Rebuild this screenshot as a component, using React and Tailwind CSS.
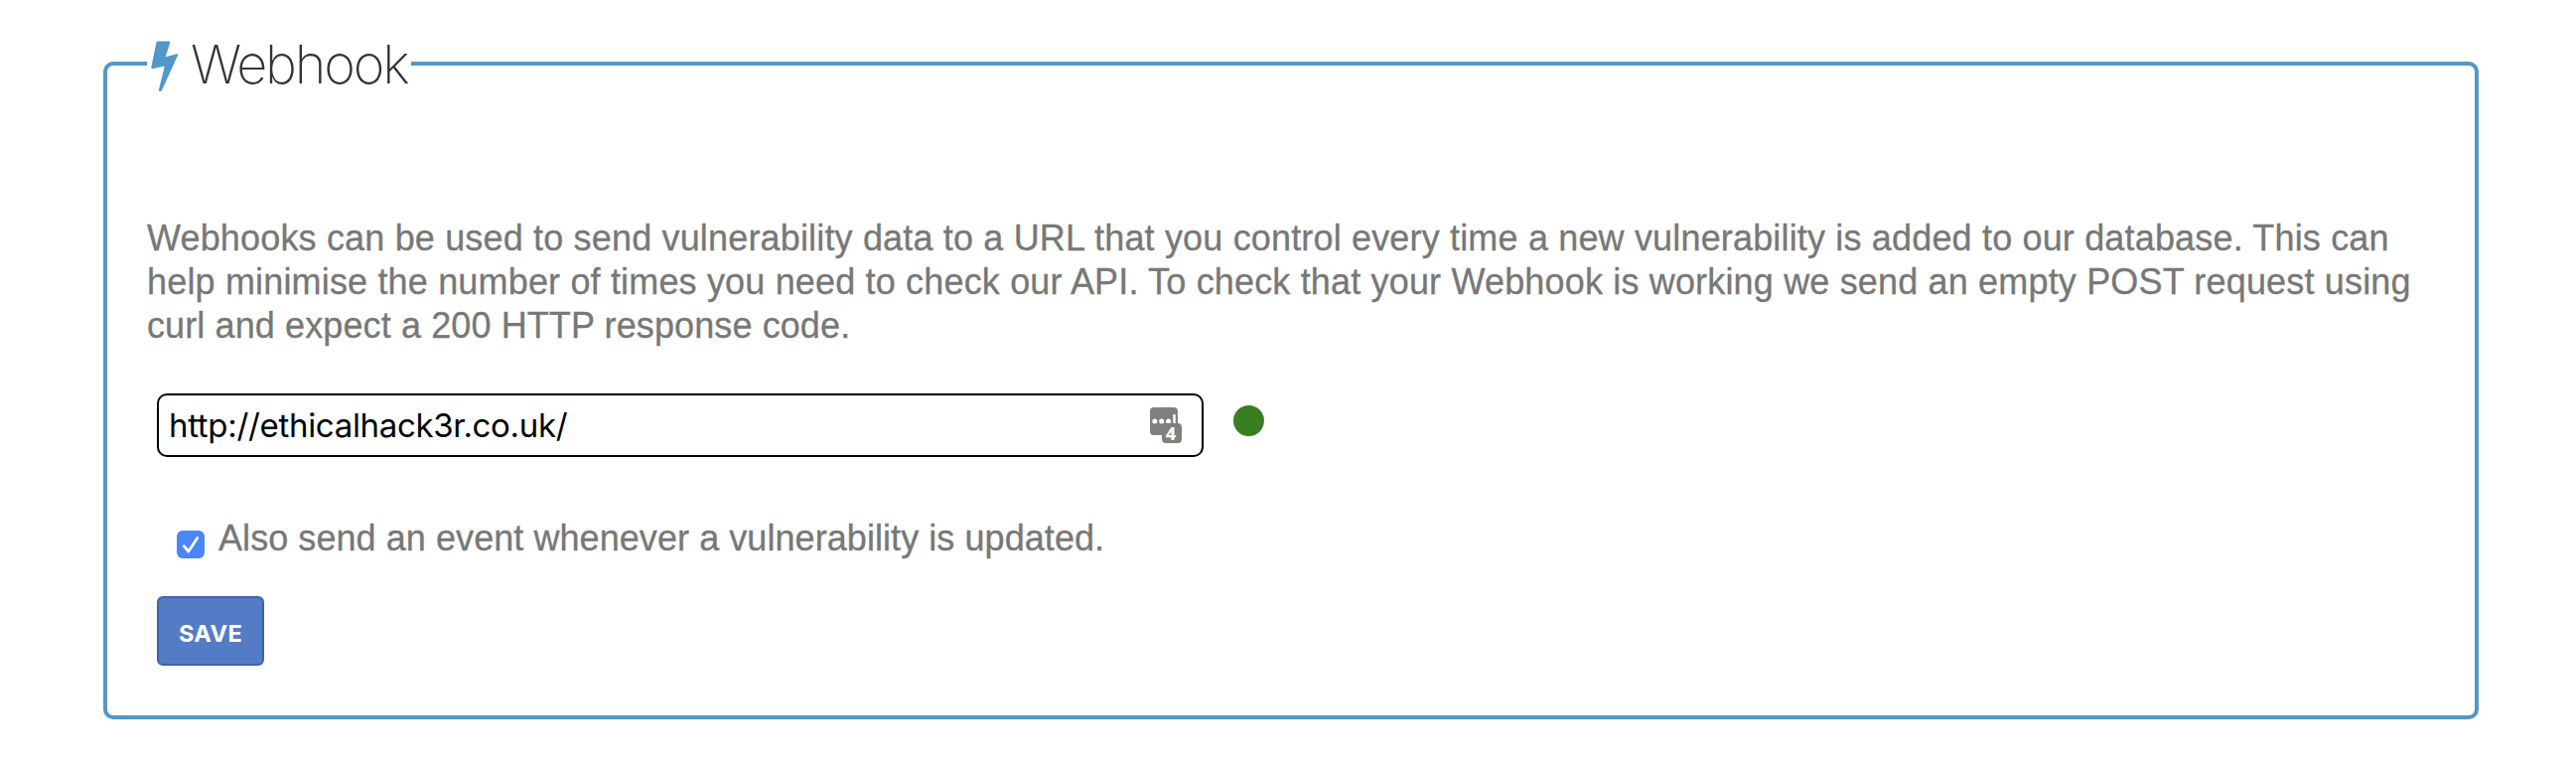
function BoltIcon() {
  return (
    <svg className="h-[52px] w-[28px] shrink-0" viewBox="0 0 28 52" fill="#5397c9">
      <path d="M7 0.5H18.2Q19.6 0.7 19.2 2L14.8 16.2L26 13.3Q27.6 13.1 27 14.8L10.9 50Q10 51.3 8.6 50.8Q7.700 50.4 8 49L13.800 25.500L1.700 28.200Q0 28.400 0.300 26.800L5.400 1.800Q5.700 0.600 7 0.500Z" />
    </svg>
  );
}

function PasswordManagerIcon() {
  return (
    <svg className="h-[36px] w-[32px] shrink-0" viewBox="0 0 32 36">
      <rect width="28" height="28" rx="4" fill="#808080" />
      <circle cx="4.800" cy="14" r="2.500" fill="#fff" />
      <circle cx="11.700" cy="14" r="2.500" fill="#fff" />
      <circle cx="18.600" cy="14" r="2.500" fill="#fff" />
      <rect x="23.300" y="7" width="2.400" height="10" fill="#fff" />
      <rect x="12" y="16" width="20" height="20" rx="4" fill="#808080" />
      <text x="21" y="32.500" textAnchor="middle" fill="#fff" className="font-['Noto_Sans',sans-serif] text-[18px] font-extrabold">4</text>
    </svg>
  );
}

export default function App() {
  return (
    <main className="h-[776px] w-[2594px] bg-white pt-[34px] pl-[104px] font-['Liberation_Sans',sans-serif] text-[36px] leading-[44px] text-[#777]">
      <fieldset className="h-[690px] w-[2392px] rounded-[10px] border-4 border-[#5397c9] px-[40px]">
        <legend className="h-[60px] w-[266px]">
          <div className="flex h-[60px] items-start pt-[7px] pl-[4px]">
            <BoltIcon />
            <h1 className="ml-[12px] font-['Inter',sans-serif] text-[54px] leading-[48px] font-extralight tracking-[-2.200px] whitespace-nowrap text-[#333]">Webhook</h1>
          </div>
        </legend>
        <p className="mt-[124px] whitespace-nowrap [-webkit-text-stroke:0.3px_#777]">
          <span className="block tracking-[0.166px]">Webhooks can be used to send vulnerability data to a URL that you control every time a new vulnerability is added to our database. This can</span>
          <span className="block tracking-[0.168px]">help minimise the number of times you need to check our API. To check that your Webhook is working we send an empty POST request using</span>
          <span className="block tracking-[0.110px]">curl and expect a 200 HTTP response code.</span>
        </p>
        <div className="mt-[46px] ml-[10px] flex">
          <div className="flex h-[64px] w-[1054px] items-center rounded-[10px] border-2 border-black pr-[20px] pl-[10px]">
            <input
              type="text"
              aria-label="Webhook URL"
              defaultValue="http://ethicalhack3r.co.uk/"
              className="h-[44px] min-w-0 flex-1 bg-transparent font-['Inter',sans-serif] text-[33px] tracking-[-0.320px] text-black outline-none"
            />
            <PasswordManagerIcon />
          </div>
          <span className="mt-[11.500px] ml-[30px] size-[31px] rounded-full bg-[#377f22]" />
        </div>
        <label className="mt-[61px] ml-[30px] flex h-[44px] items-start">
          <span className="mt-[13px] flex size-[28px] shrink-0 items-center justify-center rounded-[6px] bg-[#4a86f7]">
            <svg className="size-[28px]" viewBox="0 0 28 28" fill="none" stroke="#fff" strokeWidth="2.800" strokeLinecap="round" strokeLinejoin="round">
              <path d="M7.300 15.700L11.800 21L20.700 7.400" />
            </svg>
          </span>
          <span className="-mt-px ml-[14px] tracking-[0.065px] whitespace-nowrap [-webkit-text-stroke:0.3px_#777]">Also send an event whenever a vulnerability is updated.</span>
        </label>
        <button className="mt-[35px] ml-[10px] flex h-[70px] w-[108px] items-center justify-center rounded-[6px] border-2 border-[#3f63aa] bg-[#547bc6] pt-[6px] font-['Inter',sans-serif] text-[23.500px] leading-[30px] font-bold tracking-[0.400px] text-white">
          SAVE
        </button>
      </fieldset>
    </main>
  );
}
